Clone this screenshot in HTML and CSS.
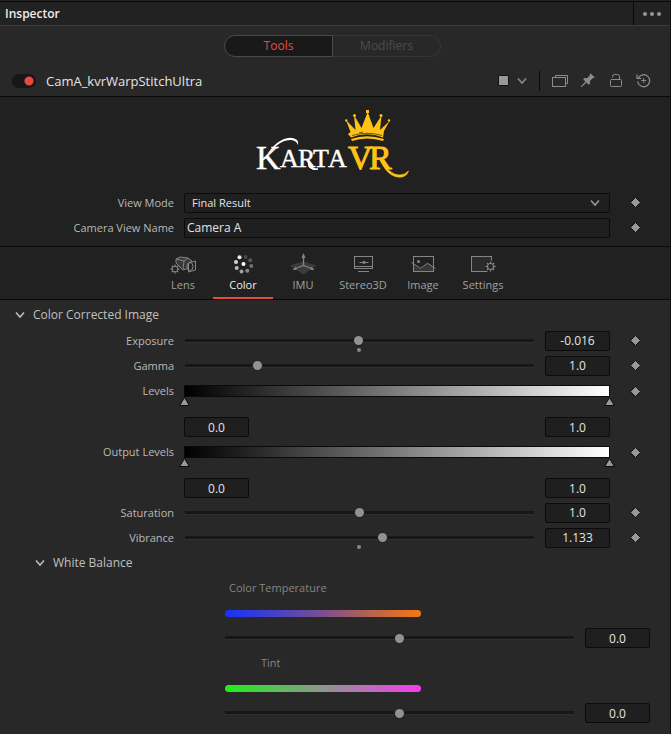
FILE: index.html
```html
<!DOCTYPE html>
<html lang="en">
<head>
<meta charset="utf-8">
<title>Inspector</title>
<link rel="stylesheet" href="styles.css">
</head>
<body>
<svg class="defs" aria-hidden="true">
  <symbol id="chevron" viewBox="0 0 10 8"><path d="M1 1.5 5 6 9 1.5" fill="none" stroke="currentColor" stroke-width="1.5"/></symbol>
  <symbol id="key" viewBox="0 0 11 11"><path d="M5.500 0.500 10.500 5.500 5.500 10.500 0.500 5.500Z" fill="#97979c" stroke="#151515"/></symbol>
  <symbol id="marker" viewBox="0 0 11 9"><path d="M5.500 0.500 10.300 8.500H0.700Z" fill="#999" stroke="#0c0c0c"/></symbol>
  <symbol id="gear" viewBox="-6 -6 12 12"><circle r="3.300" fill="none" stroke="currentColor" stroke-width="1.300"/><path d="M0-5.500V-3.500M0 5.500V3.500M-5.500 0H-3.500M5.500 0H3.500M-3.900-3.900-2.500-2.500M3.900 3.900 2.500 2.500M-3.900 3.900-2.500 2.500M3.900-3.900 2.500-2.500" stroke="currentColor" stroke-width="1.500"/></symbol>
</svg>
<main class="inspector">
  <header class="titlebar">
    <h1>Inspector</h1>
    <button class="more" aria-label="More options"><svg width="18" height="6" viewBox="0 0 18 6"><g fill="#969696"><circle cx="2" cy="3" r="2"/><circle cx="9" cy="3" r="2"/><circle cx="16" cy="3" r="2"/></g></svg></button>
  </header>

  <section class="head">
    <div class="segments">
      <button class="segment active">Tools</button>
      <button class="segment">Modifiers</button>
    </div>
    <div class="node">
      <input type="checkbox" class="switch" id="enabled" checked>
      <label for="enabled">CamA_kvrWarpStitchUltra</label>
      <div class="actions">
        <button class="swatch-button" aria-label="Node color"><span class="swatch"></span><svg width="10" height="8"><use href="#chevron"/></svg></button>
        <button aria-label="Versions"><svg width="16" height="16" viewBox="0 0 16 16" fill="none" stroke="currentColor"><path d="M3.500 4.500V2.500H15.500V10.500H13.500"/><rect x="0.500" y="4.500" width="13" height="9"/></svg></button>
        <button aria-label="Pin"><svg width="16" height="16" viewBox="0 0 16 16" fill="currentColor"><path d="M10.500 0.300 14.700 4.500 13.500 5.300 12.800 5 9.900 8 10 10.800 8.800 11.800 6.400 9.400 1.500 14.300 0.700 13.500 5.500 8.500 3.200 6.200 4.200 5.100 7 5.300 10 2.300 9.700 1.300Z"/></svg></button>
        <button aria-label="Lock"><svg width="16" height="16" viewBox="0 0 16 16" fill="none" stroke="currentColor"><path d="M4.500 4.500V3.500Q4.500 1.500 6.500 1.500H9.500Q11.500 1.500 11.500 3.500V6.500"/><rect x="2.500" y="6.500" width="11" height="7" rx="1"/></svg></button>
        <button aria-label="Reset"><svg width="16" height="16" viewBox="0 0 16 16" fill="none" stroke="currentColor"><path d="M2.200 5.200A6 6 0 1 1 1.700 8.500" stroke-width="1.300"/><path d="M1 1.500V5.500H5.300" stroke-width="1.200"/><path d="M7.700 5V10M5.200 7.500H10.200"/></svg></button>
      </div>
    </div>
  </section>

  <section class="source">
    <svg class="logo" width="154" height="72" viewBox="14 8 154 72" role="img" aria-label="KartaVR">
      <g class="wordmark">
        <text class="large" x="14" y="69">K</text>
        <text class="small" x="38 56 71 86" y="67">ARTA</text>
        <text class="large gold" x="106 127" y="69">VR</text>
      </g>
      <path d="M25 55C31 44 45 33 55 40Q57 42 56 45Q54 40 48 40C38 40 31 49 25 55Z" fill="#fff"/>
      <path d="M66 61Q70 70 76 69Q71 71 67 67Z" fill="#fff" stroke="#fff"/>
      <path d="M138 60C145 69 150 75 158 75Q163 75 166.500 71Q164 78 156 77C148 76 143 70 138 60Z" fill="#ffc316" stroke="#ffc316" stroke-width="0.700"/>
      <g fill="#ffc316">
        <path d="M106 34 109 37.500Q125 31 141 37.500L142 31 147.500 21 138 30 139.500 15.500 131.500 28 125.700 12 119.500 28 112 15 113.500 30 104 20 108.500 32Z"/>
        <path d="M109 39Q125 33.500 142 39L141 41Q125 36 110 41Z"/>
        <rect x="124" y="10" width="3" height="3"/><circle cx="112.500" cy="15.500" r="1.500"/><circle cx="139" cy="15.500" r="1.500"/><circle cx="104.300" cy="20.500" r="1.200"/><circle cx="147" cy="20.500" r="1.200"/>
      </g>
      <path d="M110 35.500Q125 31 140 35.500M117 33 121 32M128 35 133 36" fill="none" stroke="#4a3a10" stroke-width="0.800"/>
    </svg>
    <div class="row">
      <label for="view-mode">View Mode</label>
      <div class="field select">
        <select id="view-mode"><option>Final Result</option></select>
        <svg width="10" height="8"><use href="#chevron"/></svg>
      </div>
      <button class="key" aria-label="Keyframe View Mode"><svg width="11" height="11"><use href="#key"/></svg></button>
    </div>
    <div class="row">
      <label for="view-name">Camera View Name</label>
      <div class="field"><input class="text" id="view-name" type="text" value="Camera A"></div>
      <button class="key" aria-label="Keyframe Camera View Name"><svg width="11" height="11"><use href="#key"/></svg></button>
    </div>
  </section>

  <nav class="tabs">
    <button class="tab"><svg width="30" height="24" viewBox="0 0 30 24" fill="none" stroke="currentColor"><path d="M8 11V7L12 5 20 6 24 9 21 11V16L15 18 11 14Z" fill="#383838"/><path d="M8 7 16 9 20 6M16 9 15 17"/><path d="M20.500 11 27.500 9V18L20.500 20Z" fill="#222"/><ellipse cx="22" cy="14.500" rx="3" ry="4"/><use href="#gear" x="2" y="12" width="10" height="10"/></svg><span>Lens</span></button>
    <button class="tab active"><svg width="30" height="24" viewBox="0 0 30 24" fill="#fff"><circle cx="15.500" cy="12" r="2"/><circle cx="11.500" cy="5.200" r="2" fill="#eee"/><circle cx="17.700" cy="5" r="2" fill="#484848"/><circle cx="22.300" cy="8.300" r="2" fill="#585858"/><circle cx="23.300" cy="14" r="2" fill="#707070"/><circle cx="19.300" cy="18.800" r="2" fill="#888"/><circle cx="13.500" cy="19.500" r="2" fill="#a0a0a0"/><circle cx="8.700" cy="16" r="2" fill="#bbb"/><circle cx="8" cy="10" r="2" fill="#d5d5d5"/></svg><span>Color</span></button>
    <button class="tab"><svg width="30" height="24" viewBox="0 0 30 24"><path d="M1.500 13.500 15.500 9.500 28.500 13.500 15.500 22.500Z" fill="#3b3b3b"/><path d="M15.500 13.500V3M15.500 13.500 6 17M15.500 13.500 25 17" stroke="currentColor" stroke-width="1.300"/><path d="M15.500 1 17.500 6H13.500ZM4.500 18 7.500 14.800 9 17.800ZM26.500 18 23.500 14.800 22 17.800Z" fill="currentColor"/></svg><span>IMU</span></button>
    <button class="tab"><svg width="30" height="24" viewBox="0 0 30 24" fill="none" stroke="currentColor"><rect x="6.500" y="4.500" width="18" height="12"/><path d="M7 14.500H24M10 19.500H21M11.500 10.500H20.500" /><path d="M14 10.500 16 8.500 18 10.500 16 12.500Z" fill="currentColor" stroke="none"/></svg><span>Stereo3D</span></button>
    <button class="tab"><svg width="30" height="24" viewBox="0 0 30 24" fill="none" stroke="currentColor"><path d="M5 12.500 13 17 20 11 26 15V19.500H5Z" fill="#383838" stroke="none"/><rect x="5.500" y="4.500" width="20" height="15"/><path d="M3.500 10.500 12.500 16.300 19.500 11.300 27.500 16.500"/><circle cx="10.500" cy="9.500" r="1.500" fill="currentColor" stroke="none"/></svg><span>Image</span></button>
    <button class="tab"><svg width="30" height="24" viewBox="0 0 30 24" fill="none" stroke="currentColor"><rect x="3.500" y="4.500" width="20" height="15" fill="#2c2c2c"/><circle cx="22.500" cy="14.500" r="6" fill="#222" stroke="none"/><use href="#gear" x="17" y="9" width="11" height="11"/></svg><span>Settings</span></button>
  </nav>

  <section class="controls">
    <button class="group"><svg width="10" height="8"><use href="#chevron"/></svg>Color Corrected Image</button>
    <div class="row">
      <label for="exposure">Exposure</label>
      <div class="field slide"><div class="track"><input id="exposure" type="range" min="-3" max="3" step="0.001" value="-0.016"><span class="default"></span></div><input class="number" type="text" value="-0.016" aria-label="Exposure value"></div>
      <button class="key" aria-label="Keyframe Exposure"><svg width="11" height="11"><use href="#key"/></svg></button>
    </div>
    <div class="row">
      <label for="gamma">Gamma</label>
      <div class="field slide"><div class="track"><input id="gamma" type="range" min="0" max="5" step="0.001" value="1"></div><input class="number" type="text" value="1.0" aria-label="Gamma value"></div>
      <button class="key" aria-label="Keyframe Gamma"><svg width="11" height="11"><use href="#key"/></svg></button>
    </div>
    <div class="row levels">
      <label for="levels-low">Levels</label>
      <div class="field">
        <div class="ramp"></div>
        <div class="markers"><svg width="11" height="9"><use href="#marker"/></svg><svg width="11" height="9"><use href="#marker"/></svg></div>
        <div class="range"><input class="number" id="levels-low" type="text" value="0.0"><input class="number" type="text" value="1.0" aria-label="Levels high"></div>
      </div>
      <button class="key" aria-label="Keyframe Levels"><svg width="11" height="11"><use href="#key"/></svg></button>
    </div>
    <div class="row levels">
      <label for="output-low">Output Levels</label>
      <div class="field">
        <div class="ramp"></div>
        <div class="markers"><svg width="11" height="9"><use href="#marker"/></svg><svg width="11" height="9"><use href="#marker"/></svg></div>
        <div class="range"><input class="number" id="output-low" type="text" value="0.0"><input class="number" type="text" value="1.0" aria-label="Output Levels high"></div>
      </div>
      <button class="key" aria-label="Keyframe Output Levels"><svg width="11" height="11"><use href="#key"/></svg></button>
    </div>
    <div class="row">
      <label for="saturation">Saturation</label>
      <div class="field slide"><div class="track"><input id="saturation" type="range" min="0" max="2" step="0.001" value="1"></div><input class="number" type="text" value="1.0" aria-label="Saturation value"></div>
      <button class="key" aria-label="Keyframe Saturation"><svg width="11" height="11"><use href="#key"/></svg></button>
    </div>
    <div class="row">
      <label for="vibrance">Vibrance</label>
      <div class="field slide"><div class="track"><input id="vibrance" type="range" min="0" max="2" step="0.001" value="1.133"><span class="default"></span></div><input class="number" type="text" value="1.133" aria-label="Vibrance value"></div>
      <button class="key" aria-label="Keyframe Vibrance"><svg width="11" height="11"><use href="#key"/></svg></button>
    </div>
    <button class="group nested"><svg width="10" height="8"><use href="#chevron"/></svg>White Balance</button>
    <div class="balance">
      <label class="temperature-label" for="temperature">Color Temperature</label>
      <div class="spectrum"><span class="temperature"></span></div>
      <div class="slide"><div class="track"><input id="temperature" type="range" min="-1" max="1" step="0.01" value="0"></div><input class="number" type="text" value="0.0" aria-label="Color Temperature value"></div>
      <label class="tint-label" for="tint">Tint</label>
      <div class="spectrum"><span class="tint"></span></div>
      <div class="slide"><div class="track"><input id="tint" type="range" min="-1" max="1" step="0.01" value="0"></div><input class="number" type="text" value="0.0" aria-label="Tint value"></div>
    </div>
  </section>
</main>
</body>
</html>
```
FILE: styles.css
```css
* { box-sizing: border-box; }

body {
  margin: 0;
  background: #282828;
  color: #b9b9b9;
  font: 11px/16px "Open Sans", "Noto Sans", sans-serif;
}

button, input, select {
  margin: 0;
  padding: 0;
  border: 0;
  background: none;
  color: inherit;
  font: inherit;
}

svg { display: block; }
.defs { position: absolute; width: 0; height: 0; }

.inspector {
  min-height: 100vh;
  border-top: 1px solid #222;
  border-right: 1px solid #101010;
}

.titlebar {
  display: flex;
  height: 25px;
  border-top: 1px solid #080808;
  border-bottom: 1px solid #7a2420;
  background: #222;
}
.titlebar h1 {
  flex: 1;
  margin: 0;
  padding-left: 5px;
  color: #eee;
  font-size: 12px;
  font-weight: 600;
  line-height: 24px;
}
.more {
  display: flex;
  align-items: center;
  justify-content: center;
  width: 37px;
  border-left: 1px solid #080808;
}

.head {
  padding-top: 9px;
  border-bottom: 1px solid #0a0a0a;
}
.segments {
  display: flex;
  justify-content: center;
  padding-right: 5px;
}
.segment {
  width: 108px;
  height: 22px;
  border: 1px solid #353535;
  border-left: 0;
  border-radius: 0 11px 11px 0;
  color: #4c4c4c;
  font-size: 12px;
}
.segment.active {
  width: 109px;
  border: 1px solid #4a4a4a;
  border-radius: 11px 0 0 11px;
  background: #191919;
  color: #e64b3d;
}
.node {
  display: flex;
  align-items: center;
  height: 39px;
  padding: 8px 18px 0 12px;
  color: #e4e4e4;
  font-size: 13px;
}
.node label { margin-left: 10px; }
.switch {
  appearance: none;
  width: 24px;
  height: 14px;
  border-radius: 7px;
  background: radial-gradient(circle at 17px 7px, #e64b3d 4px, transparent 5px) #171717;
}
.actions {
  display: flex;
  align-items: center;
  gap: 12px;
  margin-left: auto;
  color: #8c8c8c;
}
.swatch-button {
  display: flex;
  align-items: center;
  gap: 8px;
  height: 20px;
  padding-right: 12px;
  border-right: 1px solid #080808;
}
.swatch {
  width: 11px;
  height: 11px;
  border: 1px solid #111;
  border-radius: 1px;
  background: #999;
}

.source {
  padding: 11px 4px 6px 0;
  border-bottom: 1px solid #0a0a0a;
  background: #212121;
}
.logo { margin: 0 auto 10px; }
.wordmark {
  fill: #fff;
  stroke: #fff;
  stroke-width: 0.4px;
  font-family: "Liberation Serif", serif;
}
.large { font-size: 34px; }
.small { font-size: 26px; }
.gold { fill: #ffc316; stroke: #ffc316; stroke-width: 1px; }

.row {
  display: grid;
  grid-template-columns: 174px 1fr 40px;
  column-gap: 10px;
  align-items: center;
  height: 25px;
  margin-right: 10px;
}
.source .row { margin-right: 6px; }
.row > label { text-align: right; }
.key { justify-self: start; margin-left: 10px; }

.select { position: relative; }
.select select, .text {
  appearance: none;
  display: block;
  width: 100%;
  height: 20px;
  border: 1px solid #0b0b0b;
  border-radius: 2px;
  background: #1f1f1f;
  color: #e4e4e4;
}
.select select { padding-left: 7px; }
.select svg {
  position: absolute;
  top: 6px;
  right: 10px;
  color: #999;
  pointer-events: none;
}
.text { padding-left: 2px; font-size: 12px; }

.tabs {
  display: flex;
  justify-content: center;
  padding-right: 4px;
  border-bottom: 1px solid #0a0a0a;
  background: #212121;
}
.tab {
  display: flex;
  flex-direction: column;
  align-items: center;
  gap: 1px;
  width: 60px;
  height: 52px;
  padding-top: 5px;
  border-bottom: 2px solid transparent;
  color: #858585;
}
.tab span { color: #a0a0a0; }
.tab.active { border-color: #e64b3d; }
.tab.active span { color: #eee; }

.controls { padding: 2px 0 8px; }
.group {
  display: flex;
  align-items: center;
  gap: 8px;
  height: 25px;
  margin-bottom: 1px;
  padding-left: 15px;
  color: #c0c0c0;
  font-size: 12px;
}
.group.nested { margin: 0; padding-left: 35px; }

.slide {
  display: flex;
  align-items: center;
  gap: 11px;
  height: 25px;
}
.track {
  position: relative;
  flex: 1;
  padding-left: 1px;
}
.track input {
  appearance: none;
  display: block;
  width: 100%;
  height: 11px;
  background: linear-gradient(#171717 3px, #303030 3px) center / 100% 4px no-repeat;
}
.track input::-webkit-slider-thumb {
  appearance: none;
  width: 9px;
  height: 9px;
  border-radius: 50%;
  background: #929292;
  box-shadow: 0 0 0 1px #242424;
}
.default {
  position: absolute;
  top: 13px;
  left: 50%;
  width: 4px;
  height: 4px;
  margin-left: -2px;
  border-radius: 50%;
  background: #888;
}
.number {
  width: 65px;
  height: 20px;
  border: 1px solid #0b0b0b;
  border-radius: 2px;
  background: #1f1f1f;
  color: #e4e4e4;
  font-size: 12px;
  text-align: center;
}

.levels { align-items: start; height: 61px; }
.levels > label { line-height: 26px; }
.levels .key { margin-top: 8px; }
.ramp {
  height: 12px;
  margin-top: 7px;
  border: 1px solid #0a0a0a;
  background: linear-gradient(90deg, #000, #555 35%, #fff);
}
.markers {
  display: flex;
  justify-content: space-between;
  margin: 0 -5px 11px;
}
.range { display: flex; justify-content: space-between; }

.balance {
  padding: 0 20px 0 224px;
  color: #858585;
}
.balance label { display: block; height: 26px; line-height: 25px; }
.balance .slide { height: 24px; }
.temperature-label { padding-left: 5px; }
.tint-label { padding-left: 37px; }
.spectrum {
  display: flex;
  align-items: center;
  height: 25px;
}
.spectrum span {
  width: 196px;
  height: 7px;
  margin-left: 1px;
  border-radius: 4px;
}
.temperature { background: linear-gradient(90deg, #1432ff, #7a4f8e 50%, #f5780f); }
.tint { background: linear-gradient(90deg, #1eef19, #8e958e 50%, #f53cf0); }
```
